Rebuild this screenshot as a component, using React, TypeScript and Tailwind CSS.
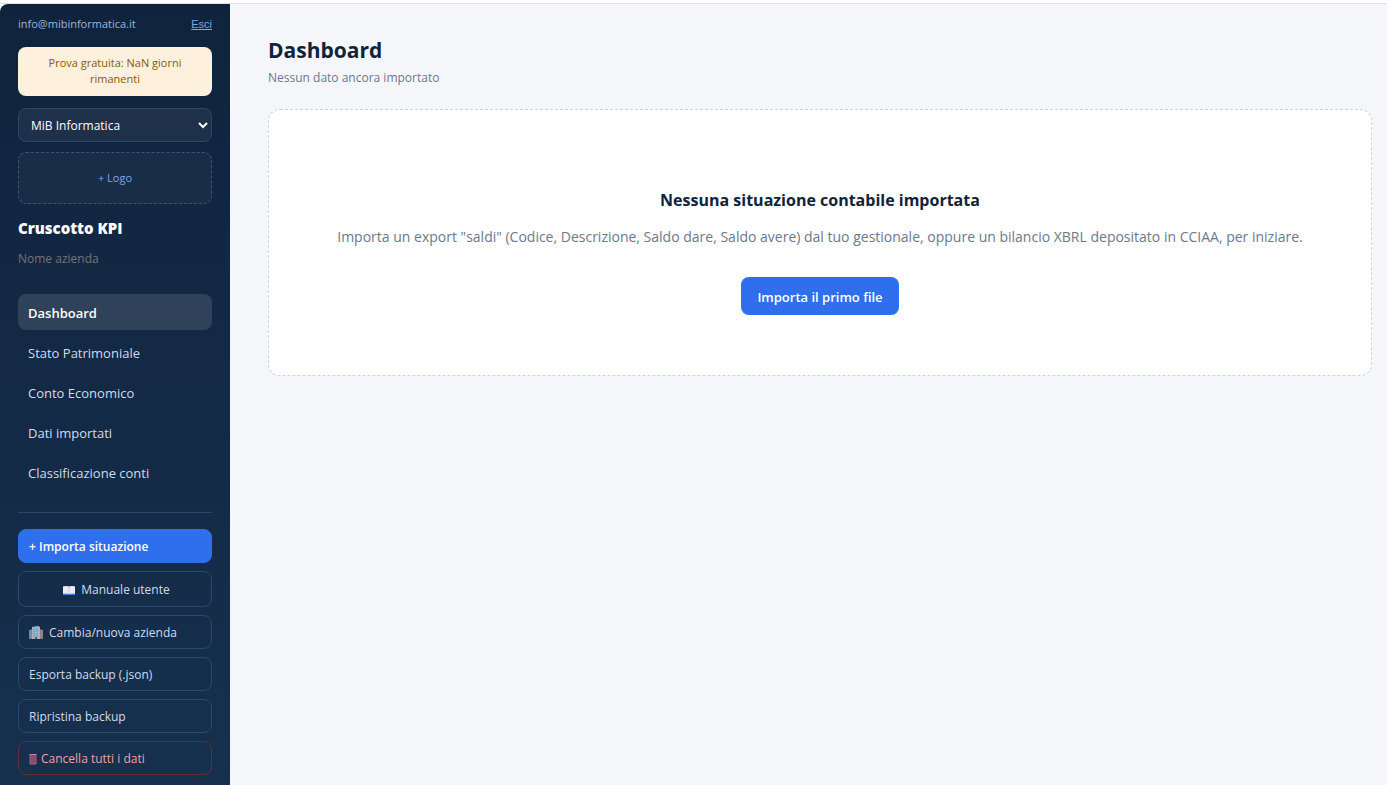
import React from "react";

const NAV = [
  "Dashboard",
  "Stato Patrimoniale",
  "Conto Economico",
  "Dati importati",
  "Classificazione conti",
];

function BookIcon() {
  return (
    <svg width="14" height="12" viewBox="0 0 14 12" aria-hidden>
      <path d="M1 2.5h12V11H1z" fill="#3f83d6" />
      <path d="M1 2.5Q4 1.6 7 2.6Q10 1.6 13 2.5V9.8Q10 9 7 10Q4 9 1 9.8z" fill="#efeaf8" />
      <path d="M7 2.6V10" stroke="#c9c2dc" strokeWidth="1" />
    </svg>
  );
}

function BuildingIcon() {
  return (
    <svg width="14" height="14" viewBox="0 0 14 14" aria-hidden>
      <path d="M0 4l4-1v10H0zM14 4l-4-1v10h4z" fill="#8a7f8d" />
      <path d="M3 1l6-1 2 1v12H3z" fill="#b9a9b2" />
      <path d="M4 2h2v9H4zM7 2h2v9H7z" fill="#4fb4e6" />
      <path d="M1 5h1v6H1zM12 5h1v6h-1z" fill="#5f9cc4" />
      <path d="M4 4h6M4 6.5h6M4 9h6" stroke="#b9a9b2" strokeWidth=".7" />
      <path d="M6 11h2v2H6z" fill="#4a5a78" />
    </svg>
  );
}

function TrashIcon() {
  return (
    <svg width="8" height="12" viewBox="0 0 8 12" aria-hidden>
      <path d="M1 1.5h6v9.5H1z" fill="#7d3f62" stroke="#b5788a" strokeWidth=".8" />
      <path d="M3 2.5v8M5 2.5v8" stroke="#b8607c" strokeWidth=".7" />
      <path d="M.6 1.5h6.8" stroke="#c58a98" />
    </svg>
  );
}

function SideButton({
  children,
  className = "border-[#2a486b] text-[#cfdcf0]",
}: {
  children: React.ReactNode;
  className?: string;
}) {
  return (
    <button
      type="button"
      className={`flex h-[34px] shrink-0 items-center rounded-lg border px-[10px] pt-[2px] text-left text-[12px] ${className}`}
    >
      {children}
    </button>
  );
}

function Sidebar() {
  return (
    <aside className="flex w-[230px] shrink-0 flex-col rounded-tl-lg bg-linear-to-b from-[#10233d] to-[#16304d] px-[18px] pt-3 pb-[10px]">
      <div className="flex h-4 items-center justify-between text-[11px] text-[#9fb6d6]">
        <span>info@mibinformatica.it</span>
        <button
          type="button"
          className="font-['Liberation_Sans',Arial,sans-serif] text-[11px] text-[#7da7e8] underline"
        >
          Esci
        </button>
      </div>

      <div className="mt-[15px] rounded-lg bg-[#fdf0dc] px-[10px] py-2 text-center text-[11px] leading-4 text-[#8a5a00]">
        <div className="pb-px">Prova gratuita: NaN giorni rimanenti</div>
      </div>

      <div className="relative mt-3">
        <select
          aria-label="Azienda"
          className="h-[34px] w-full appearance-none rounded-lg border border-[#2a486b] bg-[#1e304a] pt-[2px] pr-6 pl-3 text-[12px] text-white"
        >
          <option>MiB Informatica</option>
        </select>
        <svg
          className="pointer-events-none absolute top-[13px] right-1"
          width="10"
          height="8"
          viewBox="0 0 10 8"
          aria-hidden
        >
          <path d="M1 2l4 4 4-4" fill="none" stroke="#fff" strokeWidth="2" />
        </svg>
      </div>

      <button
        type="button"
        className="mt-[10px] h-[52px] shrink-0 rounded-lg border border-dashed border-[#3a5678] bg-[#1a2d47] text-[11px] text-[#7da7e8]"
      >
        + Logo
      </button>

      <div className="mt-[14px] text-[15px] leading-5 font-extrabold text-white">Cruscotto KPI</div>
      <input
        aria-label="Nome azienda"
        placeholder="Nome azienda"
        className="mt-[10px] h-5 w-full bg-transparent text-[12px] text-[#9fb6d6] placeholder:text-[#757575]"
      />

      <nav className="mt-[26px] flex flex-col gap-1">
        {NAV.map((label, i) => (
          <button
            key={label}
            type="button"
            className={[
              "h-9 rounded-lg px-[10px] pt-[3px] text-left text-[13px]",
              i === 0 ? "bg-[#30425a] font-semibold text-white" : "text-[#cfdcf0]",
            ].join(" ")}
          >
            {label}
          </button>
        ))}
      </nav>

      {/* Actions */}
      <div className="mt-[22px] flex flex-col gap-2 border-t border-[#2a486b] pt-4">
        <SideButton className="border-[#2f6fed] bg-[#2f6fed] font-semibold text-white">
          + Importa situazione
        </SideButton>
        <a
          href="#manuale"
          className="flex h-9 shrink-0 items-center justify-center gap-[5px] rounded-lg border border-[#2a486b] pt-[2px] pl-[2px] text-[12px] text-[#cfdcf0]"
        >
          <BookIcon />
          Manuale utente
        </a>
        <SideButton>
          <span className="flex items-center gap-[6px]">
            <BuildingIcon />
            Cambia/nuova azienda
          </span>
        </SideButton>
        <SideButton>Esporta backup (.json)</SideButton>
        <SideButton>Ripristina backup</SideButton>
        <SideButton className="border-[#5c3038] text-[#f0a0a0]">
          <span className="flex items-center gap-1">
            <TrashIcon />
            Cancella tutti i dati
          </span>
        </SideButton>
      </div>
    </aside>
  );
}

export default function App() {
  return (
    <div className="flex min-h-screen flex-col bg-white pt-[3px] font-['Open_Sans','Segoe_UI',sans-serif]">
      <div className="h-px bg-[#dfdfe3]" />
      <div className="flex flex-1">
        <Sidebar />
        <main className="min-w-0 flex-1 bg-[#f4f6fa] pt-8 pr-[15px] pl-[38px]">
          <h1 className="text-[21px] leading-7 font-bold text-[#10233d]">Dashboard</h1>
          <p className="mt-1 text-[12px] leading-5 text-[#6b7890]">Nessun dato ancora importato</p>

          <section className="mt-[21px] flex flex-col items-center rounded-xl border border-dashed border-[#c9d2e2] bg-white px-5 pt-[78px] pb-[60px] text-center">
            <h2 className="text-base leading-6 font-bold text-[#10233d]">
              Nessuna situazione contabile importata
            </h2>
            <p className="mt-[13px] text-[14px] leading-6 text-[#6b7890]">
              Importa un export "saldi" (Codice, Descrizione, Saldo dare, Saldo avere) dal tuo
              gestionale, oppure un bilancio XBRL depositato in CCIAA, per iniziare.
            </p>
            <button
              type="button"
              className="mt-7 h-[38px] rounded-lg bg-[#2f6fed] px-4 pt-[3px] text-[13px] font-semibold text-white"
            >
              Importa il primo file
            </button>
          </section>
        </main>
      </div>
    </div>
  );
}
